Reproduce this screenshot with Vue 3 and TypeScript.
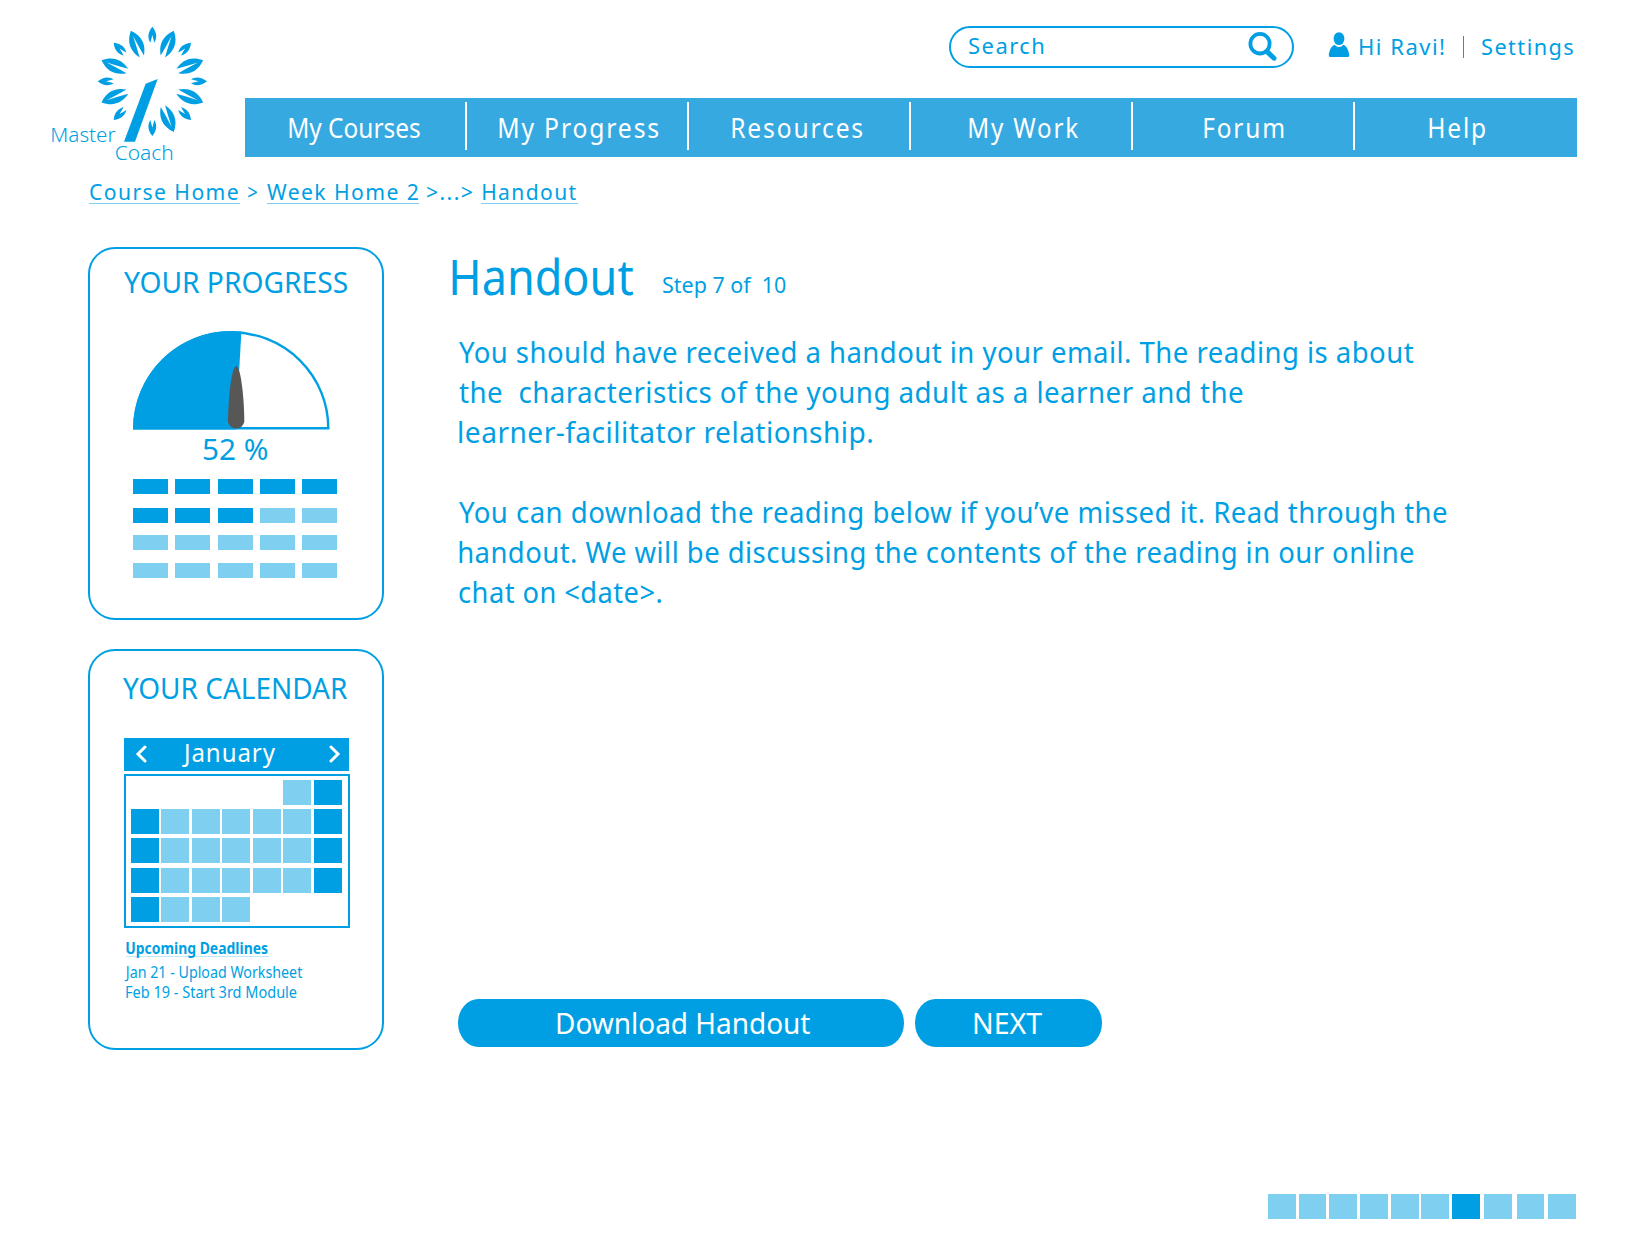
<script setup lang="ts">
import type { Directive } from 'vue'

interface NavItem {
  label: string
  start: number
  width: number
  spacing: number
}

// Condenses a line of text horizontally so that its glyphs span the given width.
const vFit: Directive<HTMLElement, number> = {
  mounted(el, binding) {
    const style = getComputedStyle(el)
    const ctx = document.createElement('canvas').getContext('2d')
    if (!ctx) return
    ctx.font = `${style.fontWeight} ${style.fontSize} ${style.fontFamily}`
    const spacing = parseFloat(style.letterSpacing) || 0
    const text = el.textContent ?? ''
    const box = ctx.measureText(text)
    const ink = box.actualBoundingBoxLeft + box.actualBoundingBoxRight + spacing * (text.length - 1)
    const scale = binding.value / ink
    el.style.width = `${binding.value}px`
    el.style.transform = `translateX(${box.actualBoundingBoxLeft * scale}px) scaleX(${scale})`
  },
}

const nav: NavItem[] = [
  { label: 'My Courses', start: 44, width: 131, spacing: 0 },
  { label: 'My Progress', start: 32, width: 159.5, spacing: 2 },
  { label: 'Resources', start: 42.5, width: 130.5, spacing: 2 },
  { label: 'My Work', start: 58, width: 109, spacing: 2 },
  { label: 'Forum', start: 70.5, width: 79.5, spacing: 2 },
  { label: 'Help', start: 74, width: 56, spacing: 2 },
]

const modules: string[] = ['11111', '11100', '00000', '00000']
const weeks: string[] = ['.....01', '1000001', '1000001', '1000001', '1000...']
const steps = Array.from({ length: 10 }, (_, i) => i + 1)
const currentStep = 7
const stepLabel = `Step ${currentStep} of  ${steps.length}`

const smallLeaves = [0, 45, 90, 135, 180, 225, 270, 315]
const largeLeaves = [23, 67.5, 112.5, 157, 247.5, 292.5, 337]

const paragraphs = [
  [
    { text: 'You should have received a handout in your email. The reading is about', width: 954 },
    { text: 'the  characteristics of the young adult as a learner and the', width: 784 },
    { text: 'learner-facilitator relationship.', width: 413 },
  ],
  [
    { text: 'You can download the reading below if you’ve missed it. Read through the', width: 988 },
    { text: 'handout. We will be discussing the contents of the reading in our online', width: 955 },
    { text: 'chat on <date>.', width: 202 },
  ],
]
</script>

<template>
  <div class="page">
    <header class="header">
      <svg class="logo" viewBox="0 0 600 480">
        <g transform="translate(337 214)">
          <path
            v-for="a in smallLeaves"
            :key="'s' + a"
            :transform="`rotate(${a})`"
            d="M0-164C15-146 14-129 6-116L3-127L0-139L-3-127L-6-116C-14-129-15-146 0-164Z"
          />
          <path
            v-for="a in largeLeaves"
            :key="'l' + a"
            :transform="`rotate(${a})`"
            d="M0-165C27-136 24-106 7-81Q3-112 0-148Q-3-112-7-81C-24-106-27-136 0-165Z"
          />
        </g>
        <path d="M317 221L353 207L285 395H252Z" />
        <text x="31" y="395" textLength="196" lengthAdjust="spacingAndGlyphs">Master</text>
        <text x="224" y="449" textLength="177" lengthAdjust="spacingAndGlyphs">Coach</text>
      </svg>

      <div class="header-main">
        <div class="tools">
          <div class="search">
            <span v-fit="75" class="t22 spaced">Search</span>
            <svg class="lens" viewBox="0 0 30 30">
              <ellipse cx="12" cy="12.7" rx="9.6" ry="9.8" />
              <path d="M18.8 20.4L26 27.2" />
            </svg>
          </div>
          <svg class="person" viewBox="0 0 22 26">
            <ellipse cx="11" cy="6.6" rx="5.4" ry="6.4" />
            <path d="M6.4 12.8Q11 17.2 15.6 12.8C19 14.5 20.6 18.5 21.3 23Q21.4 25 20 25H2Q.7 25 .8 23C1.4 18.5 3 14.5 6.4 12.8Z" />
          </svg>
          <span v-fit="84" class="t22 spaced">Hi Ravi!</span>
          <span class="pipe"></span>
          <span v-fit="91" class="t22 spaced">Settings</span>
        </div>
        <nav class="nav">
          <a v-for="n in nav" :key="n.label" class="nav-item" :style="{ paddingLeft: n.start + 'px' }">
            <span v-fit="n.width" class="nav-text" :style="{ letterSpacing: n.spacing + 'px' }">{{ n.label }}</span>
          </a>
        </nav>
      </div>
    </header>

    <div class="crumbs">
      <a class="crumb first"><span v-fit="148" class="t22 spaced">Course Home</span></a>
      <span v-fit="9" class="t22 sep-one">&gt;</span>
      <a class="crumb second"><span v-fit="151" class="t22 spaced">Week Home 2</span></a>
      <span v-fit="45" class="t22 spaced sep-two">&gt;...&gt;</span>
      <a class="crumb third"><span v-fit="93" class="t22 spaced">Handout</span></a>
    </div>

    <div class="body">
      <aside class="side">
        <section class="card progress">
          <h2><span v-fit="223">YOUR PROGRESS</span></h2>
          <svg class="gauge" viewBox="0 0 198 100">
            <path class="outline" d="M1.3 97.2A97 96 0 0 1 195.3 97.2Z" />
            <path class="filled" d="M0 98.6A98 98 0 0 1 108.4.6L102.8 98.6Z" />
            <path class="needle" d="M103.2 35C108 36 111.2 68 111.3 90.5A8.2 7.8 0 0 1 95 90.5C95.2 68 98.4 36 103.2 35Z" />
          </svg>
          <div class="percent"><span v-fit="65">52 %</span></div>
          <div class="modules">
            <div v-for="(row, r) in modules" :key="r" class="module-row">
              <i v-for="(c, k) in row" :key="k" :class="{ on: c === '1' }"></i>
            </div>
          </div>
        </section>

        <section class="card calendar">
          <h2><span v-fit="224">YOUR CALENDAR</span></h2>
          <div class="month">
            <svg class="chevron" viewBox="0 0 12 18"><path d="M10 2L3 9L10 16" /></svg>
            <span v-fit="93" class="month-name">January</span>
            <svg class="chevron" viewBox="0 0 12 18"><path d="M2 2L9 9L2 16" /></svg>
          </div>
          <div class="days">
            <template v-for="(row, r) in weeks" :key="r">
              <i v-for="(c, k) in row" :key="k" :class="{ on: c === '1', none: c === '.' }"></i>
            </template>
          </div>
          <div class="deadlines">
            <div class="deadline-title"><b v-fit="142">Upcoming Deadlines</b></div>
            <div class="deadline early"><span v-fit="178.5">Jan 21 - Upload Worksheet</span></div>
            <div class="deadline"><span v-fit="171">Feb 19 - Start 3rd Module</span></div>
          </div>
        </section>
      </aside>

      <main class="main">
        <div class="title">
          <h1><span v-fit="181">Handout</span></h1>
          <span v-fit="122.5" class="t22 step">{{ stepLabel }}</span>
        </div>
        <div class="copy">
          <p v-for="(p, i) in paragraphs" :key="i">
            <span v-for="l in p" :key="l.text" v-fit="l.width" class="line">{{ l.text }}</span>
          </p>
        </div>
        <div class="actions">
          <button class="download"><span v-fit="253">Download Handout</span></button>
          <button class="next"><span v-fit="68">NEXT</span></button>
        </div>
      </main>
    </div>

    <footer class="steps">
      <i v-for="s in steps" :key="s" :class="{ on: s === currentStep }"></i>
    </footer>
  </div>
</template>

<style>
body {
  margin: 0;
  background: #fff;
}
</style>

<style scoped>
.page {
  width: 1650px;
  height: 1257px;
  overflow: hidden;
  display: flex;
  flex-direction: column;
  color: #009fe3;
  font-family: 'Noto Sans', 'Open Sans', sans-serif;
}
span,
b {
  display: inline-block;
  white-space: pre;
  transform-origin: 0 50%;
}
i {
  display: block;
  background: #7fcff1;
}
i.on {
  background: #009fe3;
}
i.none {
  background: transparent;
}
.t22 {
  font-size: 22.5px;
  line-height: 30px;
}
.spaced {
  letter-spacing: 1.5px;
}
.header {
  display: flex;
  height: 170px;
}
.logo {
  width: 200px;
  height: 160px;
  margin: 10px 5px 0 40px;
  fill: #009fe3;
  font-size: 60px;
  font-weight: 300;
}
.header-main {
  width: 1332px;
}
.tools {
  display: flex;
  height: 72px;
  padding: 26px 0 0 704px;
}
.search {
  box-sizing: border-box;
  width: 345px;
  height: 42px;
  border: 2px solid #009fe3;
  border-radius: 21px;
  padding: 3px 14.5px 0 18px;
  display: flex;
  justify-content: space-between;
}
.lens {
  width: 30px;
  height: 30px;
  fill: none;
  stroke: #009fe3;
  stroke-width: 3.8;
}
.lens path {
  stroke-width: 5;
  stroke-linecap: round;
}
.person {
  width: 22px;
  height: 26px;
  margin: 5.5px 9.5px 0 34px;
  fill: #009fe3;
}
.tools > .t22 {
  margin-top: 6px;
}
.pipe {
  width: 1.5px;
  height: 22px;
  margin: 10px 18px 0 19px;
  background: #009fe3;
}
.nav {
  display: grid;
  grid-template-columns: repeat(6, 222px);
  height: 58.5px;
  background: #36a9e1;
  color: #fff;
}
.nav-item {
  box-sizing: border-box;
  height: 48px;
  margin-top: 4px;
  border-right: 2px solid #fff;
}
.nav-item:last-child {
  border: 0;
}
.nav-text {
  font-size: 26.5px;
  line-height: 52px;
}
.crumbs {
  display: flex;
  height: 34px;
  padding: 6px 0 0 89px;
}
.crumb {
  box-sizing: border-box;
  height: 28px;
  border-bottom: 1px solid #7fcff1;
}
.first {
  width: 151px;
  padding-left: 1px;
}
.second {
  width: 152px;
}
.third {
  width: 97px;
  padding-left: 2px;
}
.sep-one {
  margin: 0 10px 0 8px;
}
.sep-two {
  margin: 0 9px 0 8px;
}
.crumbs .t22 {
  line-height: 32px;
}
.body {
  display: flex;
  padding: 37px 0 0 88px;
}
.side {
  width: 296px;
}
.card {
  box-sizing: border-box;
  width: 296px;
  border: 2px solid #009fe3;
  border-radius: 27px;
}
.progress {
  height: 373px;
}
.calendar {
  height: 401px;
  margin-top: 29px;
}
h1,
h2,
p {
  margin: 0;
  font-weight: 400;
}
h2 {
  height: 40px;
  padding: 13px 0 0 34px;
  font-size: 29.5px;
  line-height: 40px;
}
.gauge {
  display: block;
  width: 198px;
  height: 100px;
  margin: 29px 0 0 43px;
}
.outline {
  fill: none;
  stroke: #009fe3;
  stroke-width: 2.4;
}
.filled {
  fill: #009fe3;
}
.needle {
  fill: #575756;
}
.percent {
  height: 48px;
  padding-left: 112.5px;
  font-size: 29.5px;
  line-height: 36px;
}
.modules {
  display: flex;
  flex-direction: column;
  gap: 13px;
  margin-left: 43px;
}
.module-row {
  display: flex;
  gap: 7.3px;
}
.module-row:nth-child(2) {
  margin: 1px 0 -1px;
}
.module-row i {
  width: 35px;
  height: 15px;
}
.calendar h2 {
  padding: 17px 0 0 33px;
}
.month {
  box-sizing: border-box;
  display: flex;
  justify-content: space-between;
  width: 224.5px;
  height: 32.5px;
  margin: 30px 0 3px 34px;
  padding: 7px 8px 0 11px;
  background: #009fe3;
  color: #fff;
}
.chevron {
  width: 12px;
  height: 18px;
  fill: none;
  stroke: #fff;
  stroke-width: 3;
  stroke-linecap: round;
}
.month-name {
  margin: -11px 19px 0 0;
  font-size: 25.5px;
  line-height: 36px;
  letter-spacing: 1px;
}
.days {
  box-sizing: border-box;
  display: grid;
  grid-template-columns: repeat(7, 27.6px);
  grid-auto-rows: 25px;
  gap: 4.2px 2.9px;
  width: 225.5px;
  height: 154px;
  margin-left: 34px;
  padding: 4.5px 5px;
  border: 2px solid #009fe3;
}
.deadlines {
  padding: 10.5px 0 0 35.5px;
  font-size: 16px;
  line-height: 20px;
}
.deadline-title {
  width: 143px;
  height: 18px;
  margin-bottom: 5px;
  border-bottom: 1px solid #bfe7f8;
}
.deadline {
  height: 20px;
}
.early {
  margin-left: -1.5px;
}
.main {
  padding-left: 66px;
}
.title {
  display: flex;
  height: 85px;
}
h1 {
  box-sizing: border-box;
  width: 213px;
  padding-left: 1.5px;
  font-size: 49px;
  line-height: 58px;
}
.step {
  margin-top: 23px;
}
.copy {
  margin-left: 8.5px;
  font-size: 29.5px;
}
.copy p {
  display: flex;
  flex-direction: column;
  margin-bottom: 40px;
}
.line {
  line-height: 40px;
  letter-spacing: 0.5px;
}
.actions {
  display: flex;
  gap: 11px;
  margin: 386.5px 0 0 8px;
}
button {
  height: 48.5px;
  padding: 0;
  border: 0;
  border-radius: 21px / 24.5px;
  background: #009fe3;
  color: #fff;
  font: 400 29px/46px 'Noto Sans', 'Open Sans', sans-serif;
}
.download {
  width: 446px;
  padding-left: 4px;
}
.next {
  width: 187px;
  padding-right: 2px;
}
.steps {
  display: flex;
  gap: 2.9px;
  margin: 144px 0 0 1268px;
}
.steps i {
  width: 27.8px;
  height: 25px;
}
.steps i:nth-child(8) {
  margin-left: 1px;
}
.steps i:nth-child(9) {
  margin-left: 2px;
}
.steps i:nth-child(10) {
  margin-left: 0.7px;
}
</style>
